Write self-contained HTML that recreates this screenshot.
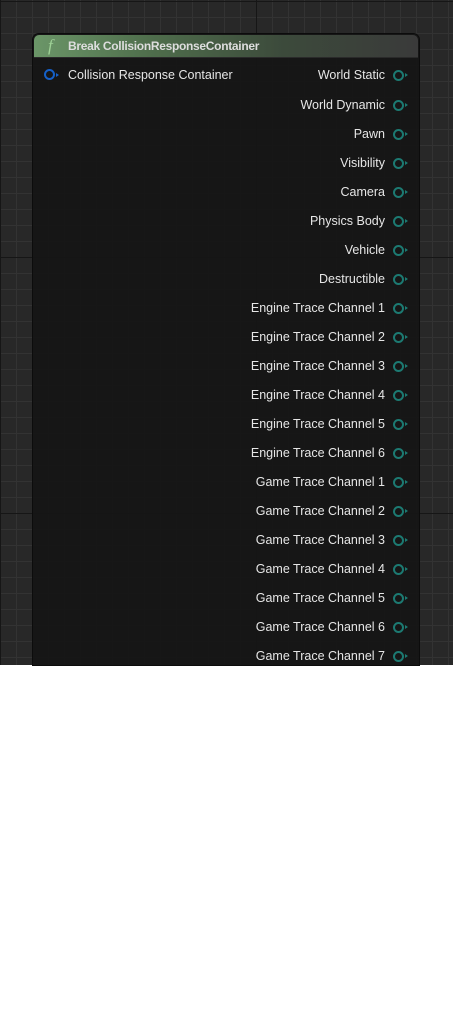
<!DOCTYPE html>
<html><head><meta charset="utf-8"><style>
html,body{margin:0;padding:0;background:#fff;}
body{width:453px;height:1035px;position:relative;overflow:hidden;font-family:"Liberation Sans",sans-serif;}
.bg{position:absolute;left:0;top:0;width:453px;height:665px;background-color:#282828;
background-image:linear-gradient(90deg,#333 1px,transparent 1px),linear-gradient(#333 1px,transparent 1px);
background-size:16px 16px,16px 16px;background-position:0 1px,0 1px;}
.maj{position:absolute;background:#161616;}
.node{position:absolute;left:33px;top:34px;width:386px;height:631px;background:rgba(22,22,22,0.93);border-radius:6px 6px 0 0;box-shadow:0 0 0 1px #0c0c0c;}
.hdr{position:absolute;left:1px;top:1px;right:1px;height:22px;border-radius:5px 5px 0 0;background:linear-gradient(90deg,#6b9668 0%,#4f6e4c 30%,#3c4a3b 65%,#3a3a3a 100%);border-bottom:1px solid #2a2a2a;}
.hdr .f{position:absolute;left:14px;top:1px;font-family:"Liberation Serif",serif;font-style:italic;font-size:17px;color:#9ed196;}
.hdr .t{position:absolute;left:34px;top:4px;font-size:12px;font-weight:bold;color:#ddd;letter-spacing:-0.3px;}
.row{position:absolute;font-size:12.5px;color:#e6e6e6;line-height:14px;}
.pin{position:absolute;width:7px;height:7px;border:2px solid #1c7a72;border-radius:50%;}
.arr{position:absolute;width:0;height:0;border-left:3px solid #1c7a72;border-top:2.5px solid transparent;border-bottom:2.5px solid transparent;}
</style></head><body>
<div class="bg"></div>
<div class="maj" style="left:0;top:1px;width:453px;height:1px"></div>
<div class="maj" style="left:0;top:257px;width:453px;height:1px"></div>
<div class="maj" style="left:0;top:513px;width:453px;height:1px"></div>
<div class="maj" style="left:256px;top:0;width:1px;height:665px"></div>
<div class="maj" style="left:0;top:0;width:1px;height:665px"></div>
<div class="node">
<div class="hdr"><span class="f">f</span><span class="t">Break CollisionResponseContainer</span></div>
<div class="pin" style="left:11px;top:35px;border-color:#1560c8"></div>
<div class="arr" style="left:23px;top:38.5px;border-left-color:#1560c8"></div>
<div style="position:absolute;left:35px;top:34px;font-size:12.5px;color:#e6e6e6">Collision Response Container</div>
</div>
<div id="rows"></div>
<script>
var n=["World Static","World Dynamic","Pawn","Visibility","Camera","Physics Body","Vehicle","Destructible","Engine Trace Channel 1","Engine Trace Channel 2","Engine Trace Channel 3","Engine Trace Channel 4","Engine Trace Channel 5","Engine Trace Channel 6","Game Trace Channel 1","Game Trace Channel 2","Game Trace Channel 3","Game Trace Channel 4","Game Trace Channel 5","Game Trace Channel 6","Game Trace Channel 7"];
var h="";for(var i=0;i<n.length;i++){var y=i==0?75:76+i*29;
h+='<div class="row" style="right:68px;top:'+(y-7)+'px">'+n[i]+'</div><div class="pin" style="left:393px;top:'+(y-5)+'px"></div><div class="arr" style="left:405px;top:'+(y-2.5)+'px"></div>';}
document.getElementById("rows").innerHTML=h;
</script>
</body></html>
